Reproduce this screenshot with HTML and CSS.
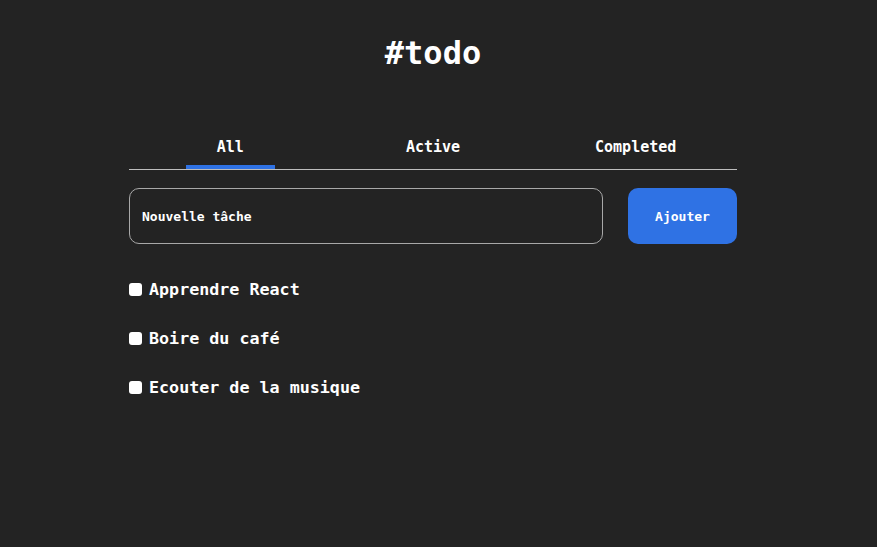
FILE: index.html
```html
<!DOCTYPE html>
<html lang="fr">
<head>
<meta charset="utf-8">
<title>#todo</title>
<link rel="stylesheet" href="styles.css">
</head>
<body>
<div class="page">
  <h1 class="title">#todo</h1>
  <div class="app">
    <nav class="tabs">
      <div class="tab active"><span>All</span></div>
      <div class="tab"><span>Active</span></div>
      <div class="tab"><span>Completed</span></div>
    </nav>
    <form class="add-row">
      <input class="new-task" type="text" placeholder="Nouvelle tâche">
      <button class="add-btn" type="button">Ajouter</button>
    </form>
    <ul class="todo-list">
      <li class="todo"><input type="checkbox" class="check"><span>Apprendre React</span></li>
      <li class="todo"><input type="checkbox" class="check"><span>Boire du café</span></li>
      <li class="todo"><input type="checkbox" class="check"><span>Ecouter de la musique</span></li>
    </ul>
  </div>
</div>
</body>
</html>
```
FILE: styles.css
```css
* { box-sizing: border-box; }
html, body {
  margin: 0;
  padding: 0;
  background: #232323;
  color: #ffffff;
  font-family: "DejaVu Sans Mono", "Liberation Mono", monospace;
}
body { height: 547px; }
.page {
  width: 866px;
  padding-top: 30px;
}
.title {
  margin: 0;
  text-align: center;
  font-size: 32px;
  font-weight: bold;
  line-height: 46px;
}
.app {
  width: 608px;
  margin: 49px auto 0;
}
.tabs {
  display: flex;
  border-bottom: 1px solid #bdbdbd;
}
.tab {
  flex: 1;
  display: flex;
  justify-content: center;
  font-size: 15px;
  font-weight: bold;
  line-height: 20px;
  padding-top: 12px;
}
.tab span {
  display: block;
  width: 89px;
  text-align: center;
  padding-bottom: 8px;
  border-bottom: 4px solid transparent;
  border-radius: 4px 4px 0 0;
}
.tab.active span {
  border-bottom-color: #2f72e4;
}
.add-row {
  display: flex;
  gap: 25px;
  margin-top: 18px;
}
.new-task {
  flex: 1;
  height: 56px;
  background: transparent;
  border: 1px solid #a8a8a8;
  border-radius: 10px;
  color: #fff;
  font-family: inherit;
  font-size: 13px;
  font-weight: bold;
  padding: 0 12px;
  outline: none;
}
.new-task::placeholder { color: #ffffff; opacity: 1; }
.add-btn {
  width: 109px;
  height: 56px;
  background: #2f72e4;
  border: none;
  border-radius: 10px;
  color: #fff;
  font-family: inherit;
  font-size: 13px;
  font-weight: bold;
}
.todo-list {
  list-style: none;
  margin: 34px 0 0;
  padding: 0;
  display: flex;
  flex-direction: column;
  gap: 27px;
}
.todo {
  display: flex;
  align-items: center;
  gap: 7px;
  font-size: 16.7px;
  font-weight: bold;
  line-height: 22px;
}
.check {
  width: 13px;
  height: 13px;
  margin: 1px 0 0;
  appearance: none;
  background: #ffffff;
  border-radius: 3px;
}
```
